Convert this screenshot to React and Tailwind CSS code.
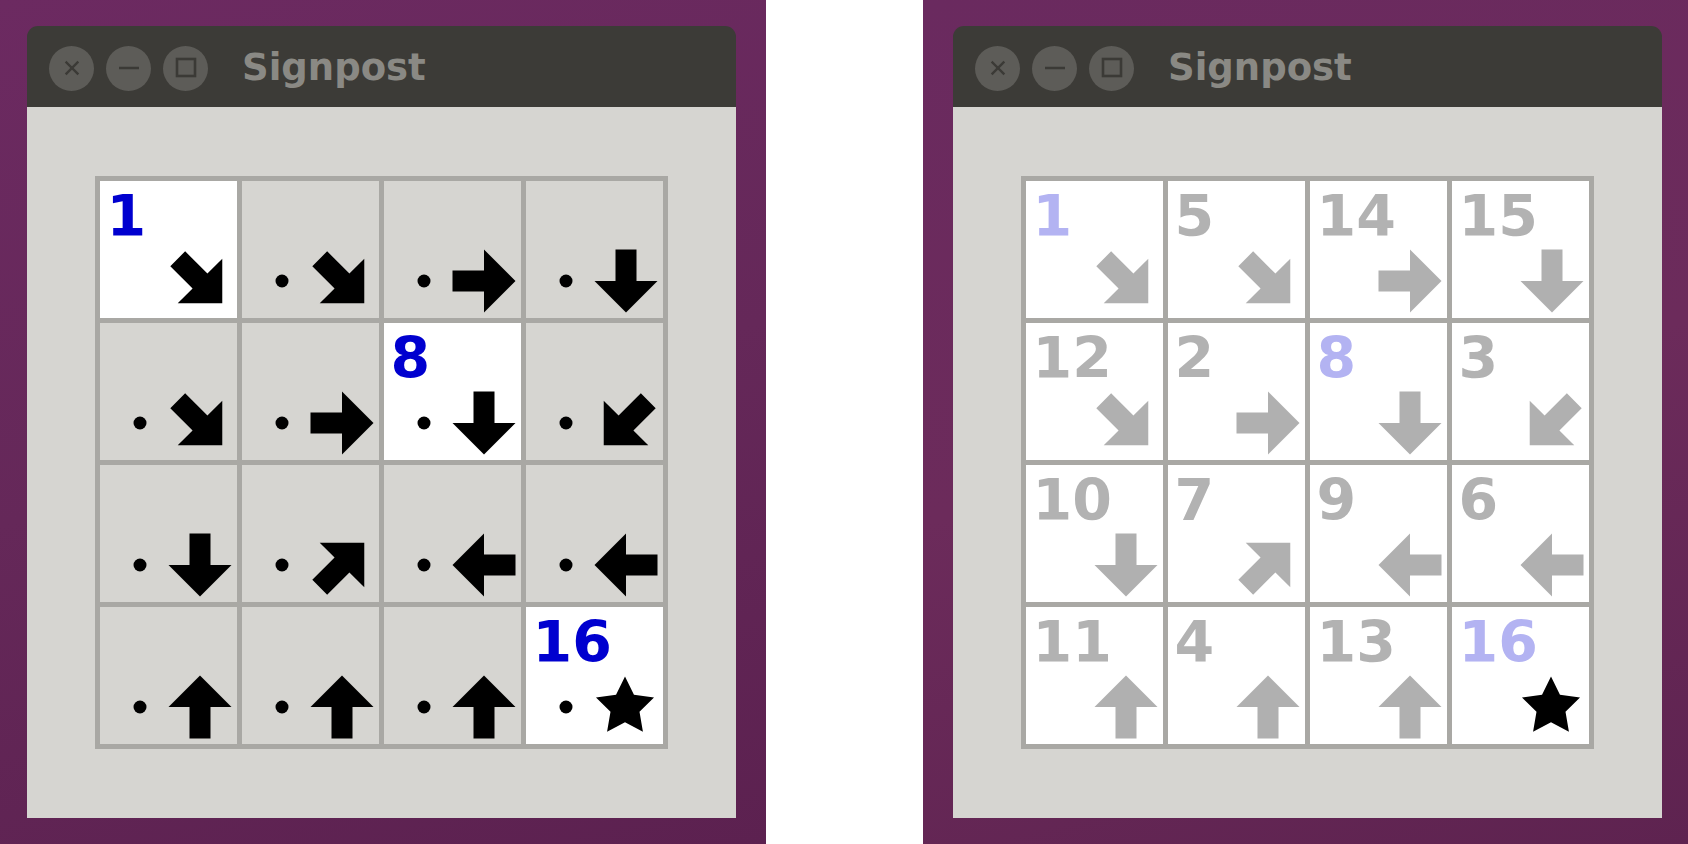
import React from "react";

const ANG = { U: 0, UR: 45, R: 90, DR: 135, D: 180, DL: 225, L: 270, UL: 315 };

function arrowPoints(dir, cx = 100, cy = 100, s = 31.5) {
  const t = (ANG[dir] * Math.PI) / 180;
  const c = Math.cos(t);
  const sn = Math.sin(t);
  const pts = [
    [0, -s],
    [s, 0],
    [s / 3, 0],
    [s / 3, s],
    [-s / 3, s],
    [-s / 3, 0],
    [-s, 0],
  ];
  return pts
    .map(([x, y]) => `${(cx + x * c - y * sn).toFixed(2)},${(cy + x * sn + y * c).toFixed(2)}`)
    .join(" ");
}

function starPoints(cx = 99, cy = 100, R = 30.5) {
  const out = [];
  for (let n = 0; n < 10; n++) {
    const a = (2 * Math.PI * n) / 10 - Math.PI / 2;
    const r = n % 2 ? R / 2 : R;
    out.push(`${(cx + r * Math.cos(a)).toFixed(2)},${(cy + r * Math.sin(a)).toFixed(2)}`);
  }
  return out.join(" ");
}

const DIRS = [
  ["DR", "DR", "R", "D"],
  ["DR", "R", "D", "DL"],
  ["D", "UR", "L", "L"],
  ["U", "U", "U", "STAR"],
];

const NUMS = [
  [1, 5, 14, 15],
  [12, 2, 8, 3],
  [10, 7, 9, 6],
  [11, 4, 13, 16],
];

const FIXED = new Set([1, 8, 16]);

function Cell({ dir, num, variant }) {
  const solved = variant === "solved";
  const fixed = FIXED.has(num);
  const showNum = solved || fixed;
  const white = solved || fixed;
  const showDot = !solved && num !== 1;
  let numColor = "";
  if (solved) numColor = fixed ? "text-[#b3b3f2]" : "text-[#b2b2b2]";
  else numColor = "text-[#0000cf]";
  const arrowFill = solved ? "#b0b0b0" : "#000000";
  return (
    <div className={`relative ${white ? "bg-white" : "bg-[#d6d5d1]"}`}>
      {showNum && (
        <div
          className={`pl-[7px] pt-[7px] text-[57px] leading-[57px] font-bold ${numColor}`}
          style={{ fontFamily: '"DejaVu Sans", sans-serif' }}
        >
          {num}
        </div>
      )}
      <svg className="absolute inset-0 w-full h-full" viewBox="0 0 137 137">
        {showDot && <circle cx="40" cy="100" r="6.5" fill="#000" />}
        {dir === "STAR" ? (
          <polygon points={starPoints()} fill="#000" />
        ) : (
          <polygon points={arrowPoints(dir)} fill={arrowFill} />
        )}
      </svg>
    </div>
  );
}

function TitleButton({ kind }) {
  return (
    <div className="w-[45px] h-[45px] rounded-full bg-[#5d5c58] flex items-center justify-center">
      <svg width="24" height="24" viewBox="0 0 24 24">
        {kind === "close" && (
          <g stroke="#3b3a36" strokeWidth="2.4" strokeLinecap="square">
            <line x1="6.5" y1="6.5" x2="17.5" y2="17.5" />
            <line x1="17.5" y1="6.5" x2="6.5" y2="17.5" />
          </g>
        )}
        {kind === "min" && <line x1="2" y1="12" x2="22" y2="12" stroke="#3b3a36" strokeWidth="2.6" />}
        {kind === "max" && (
          <rect x="3" y="3" width="18" height="17" fill="none" stroke="#3b3a36" strokeWidth="2.6" />
        )}
      </svg>
    </div>
  );
}

function Window({ variant }) {
  return (
    <div className="w-[709px] flex flex-col rounded-t-[11px] overflow-hidden">
      <div className="h-[81px] bg-[#3c3b37] flex items-center pl-[22px] pt-[3px]">
        <div className="flex gap-[12px]">
          <TitleButton kind="close" />
          <TitleButton kind="min" />
          <TitleButton kind="max" />
        </div>
        <div
          className="ml-[34px] -mt-[2px] text-[37px] font-bold text-[#8a8984] leading-none"
          style={{ fontFamily: '"DejaVu Sans", sans-serif' }}
        >
          Signpost
        </div>
      </div>
      <div className="h-[711px] bg-[#d6d5d1] flex items-center justify-center pr-px">
        <div className="w-[573px] h-[573px] bg-[#a9a8a4] p-[5px] grid grid-cols-4 grid-rows-4 gap-[5px]">
          {DIRS.map((row, r) =>
            row.map((d, c) => <Cell key={`${r}-${c}`} dir={d} num={NUMS[r][c]} variant={variant} />)
          )}
        </div>
      </div>
    </div>
  );
}

export default function App() {
  return (
    <div className="w-[1688px] h-[844px] flex bg-white overflow-hidden">
      <div className="w-[766px] h-full pt-[26px] pl-[27px] bg-[linear-gradient(165deg,#6c2a61_0%,#652859_50%,#5c2150_100%)]">
        <Window variant="play" />
      </div>
      <div className="w-[157px] h-full bg-white" />
      <div className="w-[765px] h-full pt-[26px] pl-[30px] bg-[linear-gradient(165deg,#6a2a5f_0%,#6c2b5b_50%,#5e2350_100%)]">
        <Window variant="solved" />
      </div>
    </div>
  );
}
